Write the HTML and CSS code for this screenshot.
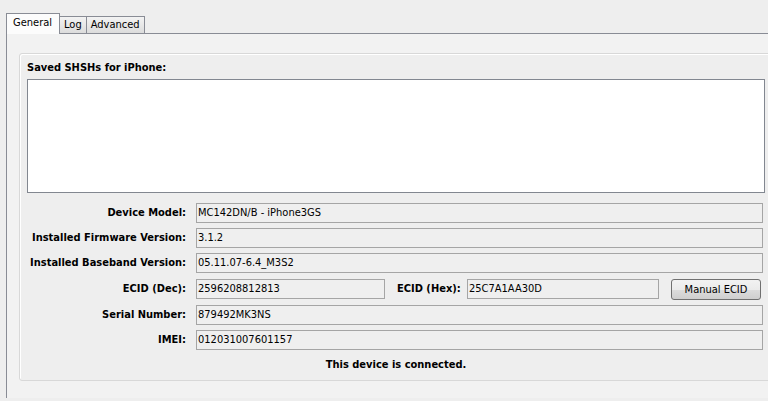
FILE: index.html
```html
<!DOCTYPE html>
<html>
<head>
<meta charset="utf-8">
<link rel="stylesheet" href="styles.css">
</head>
<body>
<div class="window">
  <div class="tabs">
    <div class="tab active">General</div>
    <div class="tab">Log</div>
    <div class="tab">Advanced</div>
  </div>
  <div class="pane">
    <div class="panel">
      <div class="title">Saved SHSHs for iPhone:</div>
      <div class="list"></div>
      <div class="form">
        <div class="label">Device Model:</div>
        <div class="field">MC142DN/B - iPhone3GS</div>
        <div class="label">Installed Firmware Version:</div>
        <div class="field">3.1.2</div>
        <div class="label">Installed Baseband Version:</div>
        <div class="field">05.11.07-6.4_M3S2</div>
        <div class="label tall">ECID (Dec):</div>
        <div class="ecid-row">
          <div class="field ecid-dec">2596208812813</div>
          <div class="label inline">ECID (Hex):</div>
          <div class="field ecid-hex">25C7A1AA30D</div>
          <button class="btn">Manual ECID</button>
        </div>
        <div class="label">Serial Number:</div>
        <div class="field">879492MK3NS</div>
        <div class="label">IMEI:</div>
        <div class="field">012031007601157</div>
      </div>
      <div class="status">This device is connected.</div>
    </div>
  </div>
</div>
</body>
</html>
```
FILE: styles.css
```css
html, body {
  margin: 0;
  padding: 0;
  width: 768px;
  height: 401px;
  overflow: hidden;
  background: #eeeeee;
}
body {
  font-family: "DejaVu Sans Condensed", "Liberation Sans", sans-serif;
  font-size: 11px;
  color: #000;
}
.window {
  padding-top: 13px;
}
.tabs {
  display: flex;
  align-items: flex-end;
  padding-left: 6px;
  height: 20px;
  position: relative;
  z-index: 1;
}
.tab {
  line-height: 16px;
  padding: 0 4px;
  border: 1px solid #898c95;
  border-bottom: none;
  border-left: none;
  background: linear-gradient(#f3f3f3, #dcdcdc);
  box-sizing: border-box;
  height: 17px;
}
.tab.active {
  line-height: 18px;
  padding: 0 7px 0 6px;
  border-left: 1px solid #898c95;
  background: #fcfcfc;
  margin-bottom: -1px;
  height: 21px;
}
.pane {
  margin-left: 6px;
  border-top: 1px solid #898c95;
  border-left: 1px solid #898c95;
  background: #f2f2f2;
  height: 365px;
  padding: 19px 0 0 12px;
  box-sizing: border-box;
}
.panel {
  width: 756px;
  box-sizing: border-box;
  border: 1px solid #d8d8d8;
  border-radius: 3px;
  box-shadow: inset 1px 1px 0 #ffffff;
  background: #eeeeee;
  padding: 7px 9px 8px 7px;
}
.title {
  font-weight: bold;
  height: 18px;
  line-height: 13px;
}
.list {
  height: 114px;
  background: #ffffff;
  border: 1px solid #828790;
  box-sizing: border-box;
}
.form {
  display: grid;
  grid-template-columns: 159px 1fr;
  column-gap: 10px;
  row-gap: 5px;
  margin-top: 10px;
  margin-right: 2px;
}
.label {
  font-weight: bold;
  text-align: right;
  line-height: 20px;
  white-space: nowrap;
}
.label.tall {
  line-height: 22px;
}
.label.inline {
  width: 62px;
  text-align: left;
  margin: 0 8px 0 12px;
}
.field {
  height: 20px;
  line-height: 18px;
  padding-left: 1px;
  border: 1px solid #a5a5a5;
  background: #efefef;
  box-sizing: border-box;
  white-space: nowrap;
}
.ecid-row {
  display: flex;
  align-items: center;
  height: 22px;
}
.ecid-dec { width: 189px; }
.ecid-hex { width: 192px; }
.btn {
  margin-left: 12px;
  width: 90px;
  height: 21px;
  padding: 0;
  font: inherit;
  color: #000;
  border: 1px solid #707070;
  border-radius: 3px;
  background: linear-gradient(#f2f2f2 0%, #ebebeb 50%, #dddddd 51%, #cfcfcf 100%);
}
.status {
  font-weight: bold;
  text-align: center;
  margin-top: 8px;
  line-height: 14px;
}
```
